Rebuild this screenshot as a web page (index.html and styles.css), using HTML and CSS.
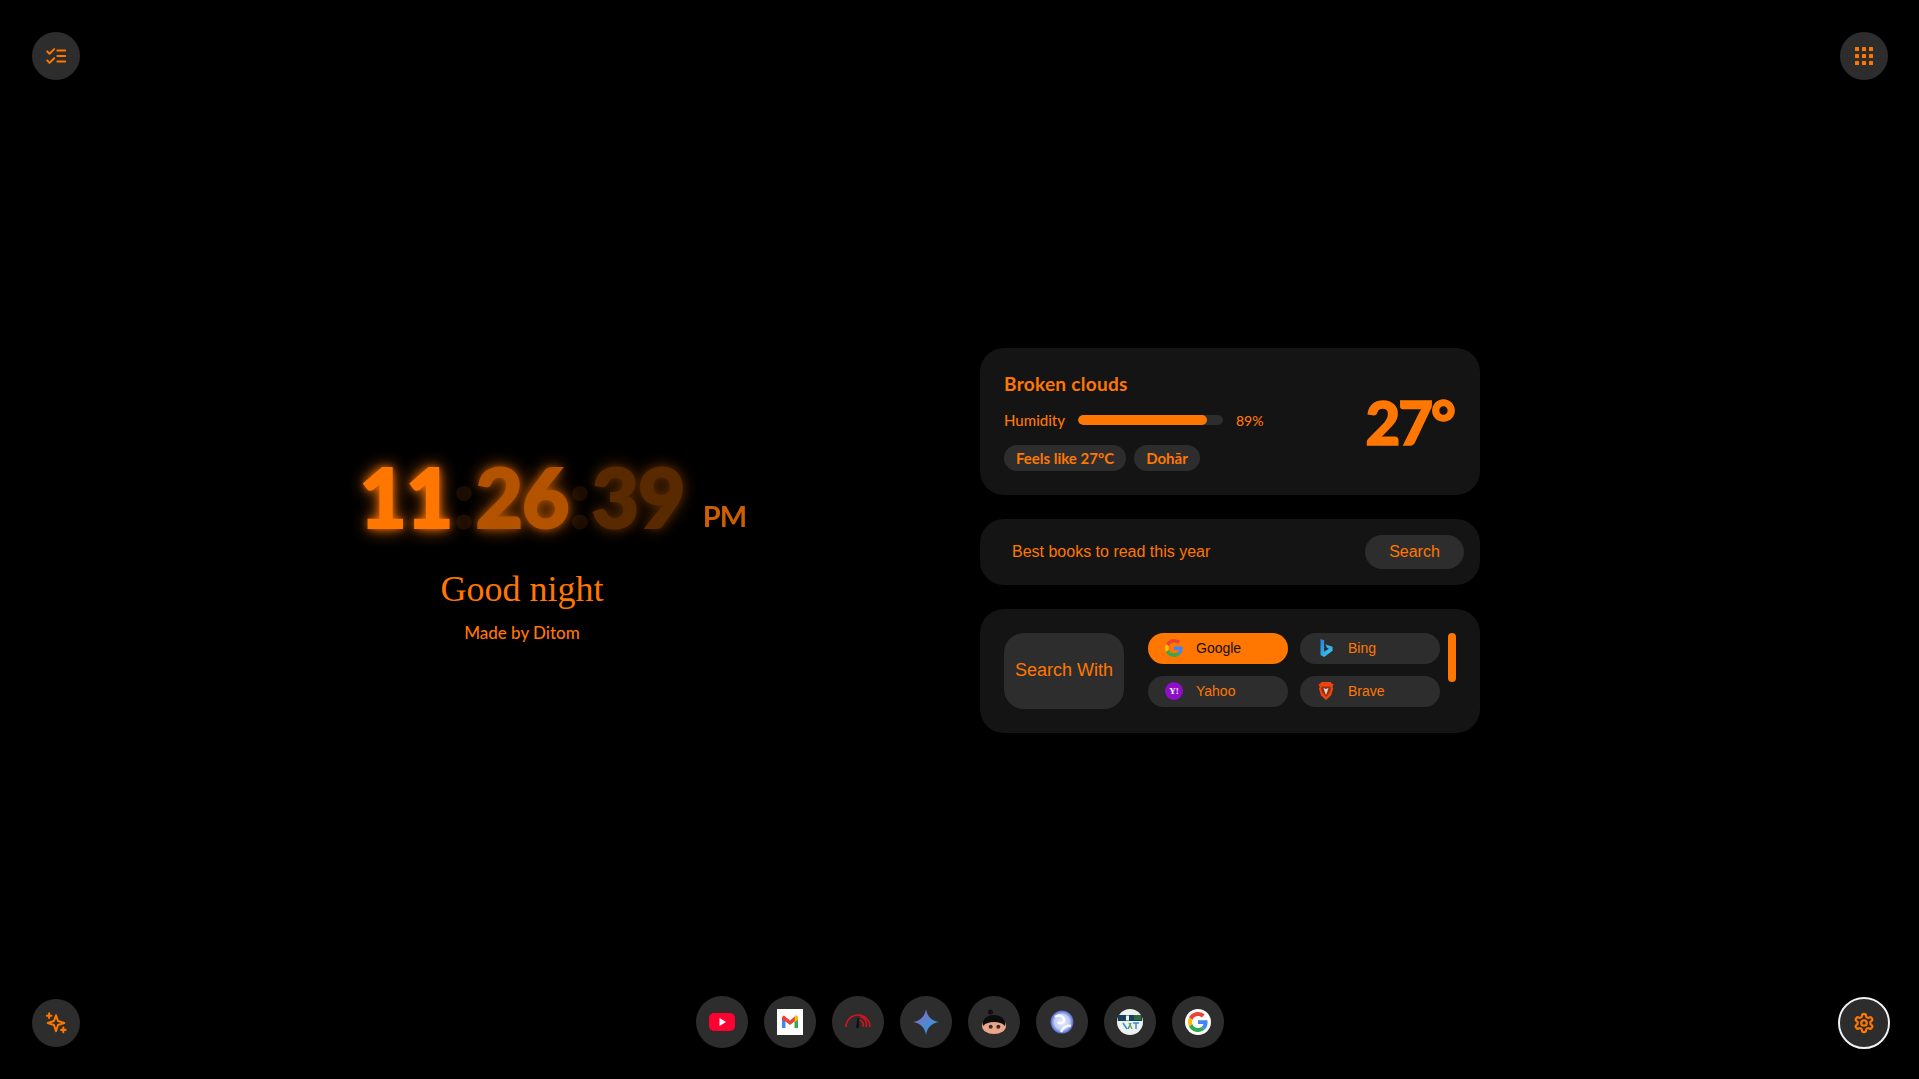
FILE: index.html
```html
<!DOCTYPE html>
<html lang="en">
<head>
<meta charset="utf-8">
<title>New Tab</title>
<link rel="stylesheet" href="styles.css">
</head>
<body>
<svg class="defs" width="0" height="0" aria-hidden="true">
  <symbol id="g-logo" viewBox="0 0 48 48">
    <path fill="#EA4335" d="M24 9.5c3.54 0 6.71 1.22 9.21 3.6l6.85-6.85C35.9 2.38 30.47 0 24 0 14.62 0 6.51 5.38 2.56 13.22l7.98 6.19C12.43 13.72 17.74 9.5 24 9.5z"/>
    <path fill="#4285F4" d="M46.98 24.55c0-1.57-.15-3.09-.38-4.55H24v9.02h12.94c-.58 2.96-2.26 5.48-4.78 7.18l7.73 6c4.51-4.18 7.09-10.36 7.09-17.65z"/>
    <path fill="#FBBC05" d="M10.53 28.59c-.48-1.45-.76-2.99-.76-4.59s.27-3.14.76-4.59l-7.98-6.19C.92 16.46 0 20.12 0 24c0 3.88.92 7.54 2.56 10.78l7.97-6.19z"/>
    <path fill="#34A853" d="M24 48c6.48 0 11.93-2.13 15.89-5.81l-7.73-6c-2.15 1.45-4.92 2.3-8.16 2.3-6.26 0-11.57-4.22-13.47-9.91l-7.98 6.19C6.51 42.62 14.62 48 24 48z"/>
  </symbol>
</svg>

<button class="fab fab-tl" aria-label="Tasks">
  <svg class="ico" viewBox="0 0 24 24"><path d="M2.500 7l2.500 2.500L10 4.500M2.500 17l2.500 2.500 5-5M13.500 6H22M13.500 12H22M13.500 18H22"/></svg>
</button>
<button class="fab fab-tr" aria-label="Apps">
  <svg class="ico-grid" viewBox="0 0 18 18"><g fill="#ff7700"><rect width="4" height="4" rx=".6"/><rect x="7" width="4" height="4" rx=".6"/><rect x="14" width="4" height="4" rx=".6"/><rect y="7" width="4" height="4" rx=".6"/><rect x="7" y="7" width="4" height="4" rx=".6"/><rect x="14" y="7" width="4" height="4" rx=".6"/><rect y="14" width="4" height="4" rx=".6"/><rect x="7" y="14" width="4" height="4" rx=".6"/><rect x="14" y="14" width="4" height="4" rx=".6"/></g></svg>
</button>
<button class="fab fab-bl" aria-label="Assistant">
  <svg class="ico" viewBox="0 0 24 24"><path d="M12 3.500l2.200 6.300 6.800 2.200-6.800 2.200L12 21l-2.200-6.800L3 12l6.800-2.200z"/><path d="M4.500 1.500v5M2 4h5M20 17v5M17.500 19.500h5"/></svg>
</button>
<button class="fab fab-br" aria-label="Settings">
  <svg class="ico ico-gear" viewBox="0 0 24 24"><path d="M12.220 2h-.44a2 2 0 0 0-2 2v.18a2 2 0 0 1-1 1.730l-.43.25a2 2 0 0 1-2 0l-.15-.08a2 2 0 0 0-2.730.730l-.22.38a2 2 0 0 0 .73 2.730l.15.1a2 2 0 0 1 1 1.720v.51a2 2 0 0 1-1 1.740l-.15.09a2 2 0 0 0-.73 2.730l.22.38a2 2 0 0 0 2.730.73l.15-.08a2 2 0 0 1 2 0l.43.25a2 2 0 0 1 1 1.730V20a2 2 0 0 0 2 2h.44a2 2 0 0 0 2-2v-.18a2 2 0 0 1 1-1.730l.43-.25a2 2 0 0 1 2 0l.15.08a2 2 0 0 0 2.730-.73l.22-.39a2 2 0 0 0-.73-2.730l-.15-.08a2 2 0 0 1-1-1.740v-.5a2 2 0 0 1 1-1.740l.15-.09a2 2 0 0 0 .73-2.730l-.22-.38a2 2 0 0 0-2.730-.73l-.15.08a2 2 0 0 1-2 0l-.43-.25a2 2 0 0 1-1-1.730V4a2 2 0 0 0-2-2z"/><circle cx="12" cy="12" r="3"/></svg>
</button>

<main class="layout">
  <section class="clock-col">
    <div class="clock">
      <span class="t t-h">11</span><span class="colon c1">:</span><span class="t t-m">26</span><span class="colon c2">:</span><span class="t t-s">39</span>
      <span class="ampm">PM</span>
    </div>
    <h1 class="greeting">Good night</h1>
    <p class="credit">Made by Ditom</p>
  </section>

  <section class="panel-col">
    <div class="card weather">
      <div class="w-info">
        <h2 class="w-title">Broken clouds</h2>
        <div class="w-hum">
          <span class="hum-label">Humidity</span>
          <span class="bar"><span class="bar-fill"></span></span>
          <span class="hum-val">89%</span>
        </div>
        <div class="chips">
          <span class="chip chip-feels">Feels like 27°C</span>
          <span class="chip chip-loc">Dohār</span>
        </div>
      </div>
      <div class="w-temp">27°</div>
    </div>

    <form class="card search">
      <span class="search-text">Best books to read this year</span>
      <span class="search-btn">Search</span>
    </form>

    <div class="card engines">
      <div class="eng-label">Search With</div>
      <div class="eng-grid">
        <div class="pill active">
          <svg class="pill-ico" viewBox="0 0 48 48"><use href="#g-logo"/></svg>
          <span>Google</span>
        </div>
        <div class="pill">
          <svg class="pill-ico" viewBox="0 0 18 18"><defs><linearGradient id="bing" x1="0" y1="0" x2="1" y2="1"><stop offset="0" stop-color="#2a7de8"/><stop offset="1" stop-color="#38d4e6"/></linearGradient></defs><path fill="url(#bing)" d="M3.500 0l3.600 1.200v11.400l4.900-2.800-2.300-1.100-1.500-3.500 7.300 2.600v3.900L7.200 18l-3.700-2z"/></svg>
          <span>Bing</span>
        </div>
        <div class="pill">
          <svg class="pill-ico" viewBox="0 0 18 18"><circle cx="9" cy="9" r="9" fill="#8f0fc9"/><text class="yahoo-mark" x="9" y="11.500" text-anchor="middle">Y!</text></svg>
          <span>Yahoo</span>
        </div>
        <div class="pill">
          <svg class="pill-ico" viewBox="0 0 18 18"><path fill="#f0430f" d="M4.500 0h9l1.500 1.800 1.500.3-.6 2-.3 1.100.6 1.500L14 13.500 9 18l-5-4.500L2 6.700l.6-1.500-.9-3.100 1.400-.3z"/><path fill="#1d1d1d" d="M5 4.500h8l1 1.500-1 4-4 5-4-5-1-4z" opacity=".45"/><path fill="#fff" opacity=".8" d="M6.500 6l2.500 1 2.500-1-1 3-1.500 4-1.500-4z"/></svg>
          <span>Brave</span>
        </div>
      </div>
      <div class="eng-scroll"></div>
    </div>
  </section>
</main>

<nav class="dock">
  <a class="dock-item" aria-label="YouTube"><svg class="dock-ico" viewBox="0 0 26 26"><rect y="4" width="26" height="18" rx="5" fill="#ff0033"/><path d="M10.500 9v8l6.500-4z" fill="#fff"/></svg></a>
  <a class="dock-item" aria-label="Gmail"><svg class="dock-ico" viewBox="0 0 26 26"><rect width="26" height="26" fill="#fff"/><path d="M5 8v11h3.500v-8z" fill="#4285f4"/><path d="M21 8v11h-3.500v-8z" fill="#34a853"/><path d="M5 8l2-1.500 6 5 6-5 2 1.500v3l-3.500 1.500L13 16l-4.500-3.500L5 11z" fill="#ea4335"/><path d="M18 6.800l1-.3 2 1.500v3l-3.500 2z" fill="#fbbc05"/></svg></a>
  <a class="dock-item" aria-label="Speed test"><svg class="dock-ico" viewBox="0 0 26 26"><g fill="none" stroke="#d8121c" stroke-width="1.700"><path d="M1 18a12 12 0 0 1 24 0"/><path d="M15 7.500a8 8 0 0 1 6 10.500"/><path d="M15 11a5 5 0 0 1 3 6.500"/></g><path d="M12.500 9h1.500v10h-3z" fill="#111"/></svg></a>
  <a class="dock-item" aria-label="Gemini"><svg class="dock-ico" viewBox="0 0 26 26"><defs><linearGradient id="gem" x1="0" y1="0" x2="1" y2="1"><stop offset="0" stop-color="#9168c0"/><stop offset=".5" stop-color="#5684d1"/><stop offset="1" stop-color="#1ba1e3"/></linearGradient></defs><path fill="url(#gem)" d="M13 0c1 7 5.500 12 13 13-7.500 1-12 6-13 13-1-7-5.500-12-13-13 7.500-1 12-6 13-13z"/></svg></a>
  <a class="dock-item" aria-label="Character"><svg class="dock-ico" viewBox="0 0 26 26"><circle cx="9.500" cy="3" r="2.500" fill="#111"/><ellipse cx="13" cy="17" rx="12" ry="8" fill="#e9a68a"/><path d="M2 17C1 9 7 6 13 6s12 3 11 11c-3-3-6-4-11-4s-8 1-11 4z" fill="#0c0c0c"/><circle cx="9.700" cy="17.700" r="2" fill="#3a2a2a"/><circle cx="17.300" cy="17.700" r="2" fill="#3a2a2a"/></svg></a>
  <a class="dock-item" aria-label="Browser"><svg class="dock-ico soft" viewBox="0 0 26 26"><defs><radialGradient id="orb"><stop offset="0" stop-color="#e8edfb"/><stop offset=".65" stop-color="#c3cff2"/><stop offset="1" stop-color="#4d63c8"/></radialGradient></defs><circle cx="13" cy="13" r="11.500" fill="url(#orb)"/><path d="M6 8c4-3 8-1 9 2s-3 6-6 3M12 23c2-5 6-7 10-6" fill="none" stroke="#fff" stroke-width="2.500" opacity=".85"/></svg></a>
  <a class="dock-item" aria-label="Site"><svg class="dock-ico soft" viewBox="0 0 26 26"><circle cx="13" cy="13" r="13" fill="#eef1ee"/><rect x="1" y="6" width="24" height="6" fill="#17405e"/><rect x="9" y="6.500" width="3" height="5" fill="#eef1ee"/><rect x="17" y="6" width="7" height="5" fill="#2e6b3e"/><path d="M6 14l4 6M11 20l3-6M16 14h6M19 14v6" stroke="#3b8ed0" stroke-width="1.500" fill="none"/><path d="M12 14l3 6" stroke="#7fae3c" stroke-width="1.500"/></svg></a>
  <a class="dock-item" aria-label="Google"><svg class="dock-ico" viewBox="0 0 26 26"><circle cx="13" cy="13" r="13" fill="#fff"/><svg x="3" y="3" width="20" height="20" viewBox="0 0 48 48"><use href="#g-logo"/></svg></svg></a>
</nav>
</body>
</html>
```
FILE: styles.css
```css
* { box-sizing: border-box; }
html, body { margin: 0; height: 100%; }
body {
  background: #000;
  color: #ff7700;
  font-family: "Lato", "Liberation Sans", sans-serif;
  overflow: hidden;
  position: relative;
}
.defs { position: absolute; }

/* corner buttons */
.fab {
  position: absolute;
  width: 48px;
  height: 48px;
  border: 0;
  padding: 0;
  border-radius: 50%;
  background: #2d2d2d;
  display: flex;
  align-items: center;
  justify-content: center;
}
.fab-tl { top: 32px; left: 32px; }
.fab-tr { top: 32px; right: 31px; }
.fab-bl { bottom: 32px; left: 32px; }
.fab-br { bottom: 32px; right: 31px; outline: 2px solid #f2f2f2; outline-offset: 0; }
.ico { width: 22px; height: 22px; fill: none; stroke: #ff7700; stroke-width: 2.2; stroke-linecap: round; stroke-linejoin: round; }
.ico-gear { stroke-width: 2.4; }
.ico-grid { width: 18px; height: 18px; }

/* main two-column layout */
.layout {
  height: 100%;
  padding-left: 82px;
  padding-top: 2px;
  display: grid;
  grid-template-columns: 880px 500px;
  column-gap: 18px;
  align-items: center;
}

/* clock column */
.clock-col {
  display: flex;
  flex-direction: column;
  align-items: center;
  margin-top: 2px;
}
.clock {
  position: relative;
  display: flex;
  align-items: baseline;
  font-size: 82px;
  line-height: 110px;
  font-weight: 900;
}
.t {
  text-shadow: 0 0 18px #ff7700, 0 0 8px #ff7700;
  letter-spacing: -1px;
  -webkit-text-stroke: 2px #ff7700;
}
.t-h { opacity: 1; }
.t-m { opacity: .7; }
.t-s { opacity: .35; }
.colon { opacity: .1; width: 23px; text-align: center; -webkit-text-stroke: 2px #ff7700; }
.ampm {
  position: absolute;
  left: calc(100% + 18px);
  bottom: 15px;
  font-size: 29px;
  line-height: 40px;
  font-weight: 700;
  letter-spacing: -1px;
  opacity: .8;
}
.greeting {
  margin: 16px 0 0;
  font-family: "Liberation Serif", serif;
  font-size: 36px;
  line-height: 44px;
  font-weight: 400;
}
.credit { margin: 12px 0 0; font-size: 17px; line-height: 20px; font-weight: 500; }

/* right column cards */
.panel-col { display: flex; flex-direction: column; gap: 24px; width: 500px; }
.card { background: #141414; border-radius: 24px; }

.weather {
  height: 147px;
  padding: 24px;
  display: flex;
  align-items: center;
  justify-content: space-between;
}
.w-info { display: flex; flex-direction: column; }
.w-title { margin: 0; font-size: 19px; line-height: 24px; font-weight: 700; letter-spacing: .3px; }
.w-hum { display: flex; align-items: center; margin-top: 14px; height: 20px; font-size: 15px; font-weight: 500; }
.hum-label { width: 74px; }
.bar { width: 145px; height: 10px; border-radius: 5px; background: #2d2d2d; display: block; overflow: hidden; }
.bar-fill { display: block; width: 89%; height: 100%; border-radius: 5px; background: #ff7700; }
.hum-val { margin-left: 13px; font-size: 14px; }
.chips { display: flex; gap: 8px; margin-top: 15px; }
.chip { height: 26px; line-height: 26px; border-radius: 13px; background: #2d2d2d; font-size: 15px; font-weight: 700; text-align: center; }
.chip-feels { width: 122px; }
.chip-loc { width: 66px; }
.w-temp {
  font-size: 60px;
  line-height: 60px;
  font-weight: 900;
  letter-spacing: -2px;
  -webkit-text-stroke: 1.5px #ff7700;
  margin-right: 2px;
}

.search {
  height: 66px;
  padding: 0 16px 0 32px;
  display: flex;
  align-items: center;
  justify-content: space-between;
  font-family: "Liberation Sans", sans-serif;
  font-size: 16px;
}
.search-btn {
  width: 99px;
  height: 34px;
  line-height: 34px;
  border-radius: 17px;
  background: #2d2d2d;
  text-align: center;
}

.engines {
  height: 124px;
  padding: 24px;
  display: flex;
  font-family: "Liberation Sans", sans-serif;
}
.eng-label {
  width: 120px;
  height: 76px;
  padding-bottom: 2px;
  border-radius: 20px;
  background: #2d2d2d;
  font-size: 18px;
  display: flex;
  align-items: center;
  justify-content: center;
}
.eng-grid {
  margin-left: 24px;
  display: grid;
  grid-template-columns: 140px 140px;
  grid-auto-rows: 31px;
  gap: 12px;
}
.pill {
  display: flex;
  align-items: center;
  gap: 13px;
  padding: 0 0 2px 17px;
  border-radius: 16px;
  background: #2d2d2d;
  font-size: 14px;
}
.pill.active { background: #ff7700; color: #111; }
.pill-ico { width: 18px; height: 18px; flex: none; }
.yahoo-mark { font-family: "Liberation Serif", serif; font-size: 9px; font-weight: 700; fill: #fff; }
.eng-scroll { width: 8px; height: 49px; margin-left: 8px; border-radius: 4px; background: #ff7700; }

/* bottom dock */
.dock {
  position: absolute;
  left: 696px;
  bottom: 31px;
  display: flex;
  gap: 16px;
}
.dock-item {
  width: 52px;
  height: 52px;
  border-radius: 50%;
  background: #2d2d2d;
  display: flex;
  align-items: center;
  justify-content: center;
}
.dock-ico { width: 26px; height: 26px; }
.soft { filter: blur(.5px); }
```
